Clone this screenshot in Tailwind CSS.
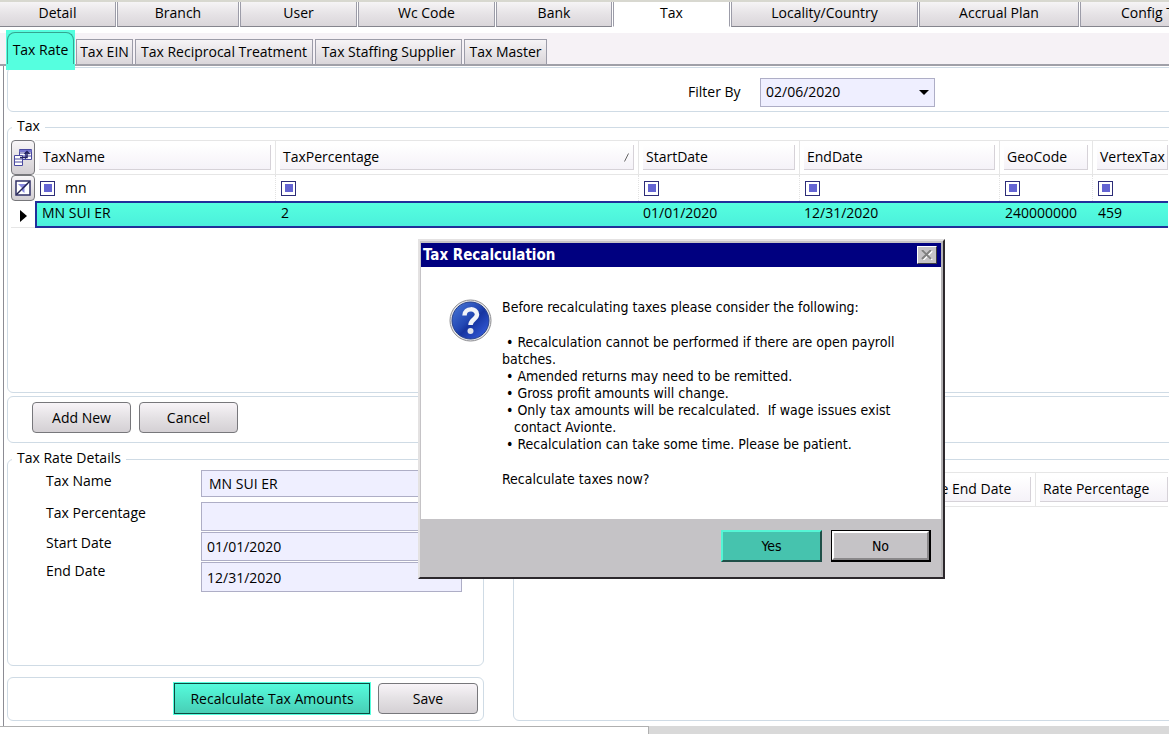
<!DOCTYPE html>
<html lang="en">
<head>
    <meta charset="UTF-8">
    <meta name="viewport" content="width=device-width, initial-scale=1.0">
    <title>Tax Setup</title>
    <script src="https://cdn.jsdelivr.net/npm/@tailwindcss/browser@4"></script>
</head>
<body class="bg-white text-black font-['Open_Sans','Noto_Sans',sans-serif] text-[14px] leading-[18px]">
    <div class="relative min-h-screen overflow-hidden flex flex-col">

        <!-- Main tabs -->
        <nav class="flex shrink-0 gap-px h-[27px] border-t-2 border-[#d8d8d0] whitespace-nowrap">
            <button class="w-[116px] pb-[2px] shrink-0 border-r border-b border-b-[#85858d] border-[#9c9ca8] bg-linear-to-b from-[#f6f4f6] via-[#e6e3e6] to-[#dad6da]">Detail</button>
            <button class="w-[122px] pb-[2px] shrink-0 border-x border-b border-b-[#85858d] border-[#9c9ca8] bg-linear-to-b from-[#f6f4f6] via-[#e6e3e6] to-[#dad6da]">Branch</button>
            <button class="w-[117px] pb-[2px] shrink-0 border-x border-b border-b-[#85858d] border-[#9c9ca8] bg-linear-to-b from-[#f6f4f6] via-[#e6e3e6] to-[#dad6da]">User</button>
            <button class="w-[137px] pb-[2px] shrink-0 border-x border-b border-b-[#85858d] border-[#9c9ca8] bg-linear-to-b from-[#f6f4f6] via-[#e6e3e6] to-[#dad6da]">Wc Code</button>
            <button class="w-[116px] pb-[2px] shrink-0 border-x border-b border-b-[#85858d] border-[#9c9ca8] bg-linear-to-b from-[#f6f4f6] via-[#e6e3e6] to-[#dad6da]">Bank</button>
            <button class="w-[117px] pb-[2px] shrink-0 border-x border-b border-b-white border-[#9c9ca8] bg-white">Tax</button>
            <button class="w-[187px] pb-[2px] shrink-0 border-x border-b border-b-[#85858d] border-[#9c9ca8] bg-linear-to-b from-[#f6f4f6] via-[#e6e3e6] to-[#dad6da]">Locality/Country</button>
            <button class="w-[160px] pb-[2px] shrink-0 border-x border-b border-b-[#85858d] border-[#9c9ca8] bg-linear-to-b from-[#f6f4f6] via-[#e6e3e6] to-[#dad6da]">Accrual Plan</button>
            <button class="w-[150px] pb-[2px] shrink-0 border-x border-b border-b-[#85858d] border-[#9c9ca8] bg-linear-to-b from-[#f6f4f6] via-[#e6e3e6] to-[#dad6da]">Config Tax</button>
        </nav>

        <!-- Sub tabs -->
        <nav class="flex shrink-0 items-end gap-[2px] h-[33px] mt-[6px] pl-[6px] border-b-2 border-[#a0a0a8] bg-[#f6f2f6] whitespace-nowrap">
            <div class="relative z-10 -mb-[6px] -mt-1 w-[69px] h-10 shrink-0 bg-[#55ffdf] px-px pt-[2px] pb-[6px]">
                <button class="w-[67px] h-full pt-[3px] rounded-t-lg border-x border-t border-[#35a590]">Tax Rate</button>
            </div>
            <button class="h-[25px] w-[57px] pb-px shrink-0 -ml-px border-x border-t border-[#9c9ca8] bg-linear-to-b from-[#f6f4f6] to-[#dad6da]">Tax EIN</button>
            <button class="h-[25px] w-[178px] pb-px shrink-0 border-x border-t border-[#9c9ca8] bg-linear-to-b from-[#f6f4f6] to-[#dad6da]">Tax Reciprocal Treatment</button>
            <button class="h-[25px] w-[147px] pb-px shrink-0 border-x border-t border-[#9c9ca8] bg-linear-to-b from-[#f6f4f6] to-[#dad6da]">Tax Staffing Supplier</button>
            <button class="h-[25px] w-[83px] pb-px shrink-0 border-x border-t border-[#9c9ca8] bg-linear-to-b from-[#f6f4f6] to-[#dad6da]">Tax Master</button>
        </nav>

        <main class="ml-[3px] pl-[3px] pt-px pb-[5px] border-l border-[#8c8c94]">
            <!-- Date filter -->
            <section class="flex items-center h-[45px] -mr-4 pl-[680px] pt-[5px] border border-[#cfdbe5] rounded-md">
                <label for="filterBy" class="w-[72px]">Filter By</label>
                <div class="relative w-[175px]">
                    <select id="filterBy" class="appearance-none block w-full h-[29px] pl-[5px] border border-[#aeaec6] bg-[#efefff]">
                        <option>02/06/2020</option>
                    </select>
                    <svg class="absolute right-[6px] top-3 pointer-events-none" width="10" height="5" viewBox="0 0 10 5"><path d="M0 0H10L5 5Z" fill="#000"/></svg>
                </div>
            </section>

            <!-- Tax grid -->
            <fieldset class="min-w-0 h-[275px] mt-[6px] -mr-4 pl-[3px] pr-4 pt-1 border border-[#cfdbe5] rounded-md">
                <legend class="ml-px px-[5px] pb-[3px] leading-[15px]">Tax</legend>
                <table class="table-fixed w-full border-separate border-spacing-0 text-left">
                    <colgroup>
                        <col class="w-6"><col class="w-[241px]"><col class="w-[363px]"><col class="w-[161px]"><col class="w-[200px]"><col class="w-[93px]"><col>
                    </colgroup>
                    <thead>
                        <tr class="h-[35px]">
                            <th class="p-0">
                                <button aria-label="Column chooser" class="flex items-center justify-center w-6 h-[35px] rounded border border-[#77777b] bg-linear-to-b from-[#f8f6f8] to-[#d2ced2]">
                                    <svg width="19" height="20" viewBox="0 0 19 20" fill="#fff" stroke="#4949a0">
                                        <path d="M5.500 1.500H17.500V11.500H5.500ZM5.500 5H17.500M5.500 8H17.500M11.500 1.500V11.500"/>
                                        <path d="M5.500 2H17.500V4H5.500Z" fill="#7777d0" stroke="none"/>
                                        <path d="M.500 7.500H8.500V17.500H.500ZM.500 11H8.500M.500 14H8.500"/>
                                        <path d="M6 9.500H13V4M10.500 6L13 3.500L15.500 6" fill="none" stroke="#222260" stroke-width="1.500"/>
                                    </svg>
                                </button>
                            </th>
                            <th class="p-1 font-normal border-y border-r border-[#e6e6e6]"><div class="h-[25px] pl-1 leading-6 border-r border-b border-[#d6d2d8] bg-linear-to-b from-white to-[#f5f2f8]">TaxName</div></th>
                            <th class="p-1 font-normal border-y border-r border-[#e6e6e6]"><div class="flex justify-between items-center h-[25px] pl-[3px] pr-1 leading-6 border-r border-b border-[#d6d2d8] bg-linear-to-b from-white to-[#f5f2f8]">TaxPercentage
                                <svg width="5" height="9" viewBox="0 0 5 9"><path d="M.500 8.500L4.500 .500" stroke="#666"/></svg></div></th>
                            <th class="p-1 font-normal border-y border-r border-[#e6e6e6]"><div class="h-[25px] pl-[3px] leading-6 border-r border-b border-[#d6d2d8] bg-linear-to-b from-white to-[#f5f2f8]">StartDate</div></th>
                            <th class="p-1 font-normal border-y border-r border-[#e6e6e6]"><div class="h-[25px] pl-[3px] leading-6 border-r border-b border-[#d6d2d8] bg-linear-to-b from-white to-[#f5f2f8]">EndDate</div></th>
                            <th class="p-1 font-normal border-y border-r border-[#e6e6e6]"><div class="h-[25px] pl-[3px] leading-6 border-r border-b border-[#d6d2d8] bg-linear-to-b from-white to-[#f5f2f8]">GeoCode</div></th>
                            <th class="py-1 pl-1 pr-0 font-normal border-y border-[#e6e6e6]"><div class="h-[25px] pl-[3px] leading-6 border-r border-b border-[#d6d2d8] bg-linear-to-b from-white to-[#f5f2f8]">VertexTax</div></th>
                        </tr>
                    </thead>
                    <tbody>
                        <tr class="h-[26px]">
                            <td class="p-0">
                                <button aria-label="Clear filters" class="flex items-center justify-center w-6 h-[26px] rounded border border-[#77777b] bg-linear-to-b from-[#f8f6f8] to-[#d2ced2]">
                                    <svg width="16" height="16" viewBox="0 0 16 16" fill="none">
                                        <rect x="1" y="1" width="14" height="14" fill="#fff" stroke="#303068" stroke-width="1.500"/>
                                        <path d="M3 4H13L9.500 8V13L7 11V8Z" fill="#8b8be0"/>
                                        <path d="M1.500 14.500L14.500 1.500" stroke="#222250" stroke-width="1.500"/>
                                    </svg>
                                </button>
                            </td>
                            <td class="py-0 pl-[5px] pr-0 border-r border-dotted border-[#e2e2e2]"><div class="flex items-center gap-[10px]">
                                <button aria-label="TaxName operator" class="flex items-center justify-center size-[15px] shrink-0 border border-[#2c2c78]"><span class="block size-2 bg-[#6464d2]"></span></button>
                                <input aria-label="TaxName filter" type="text" value="mn" class="w-40 h-5 pb-[2px]"></div></td>
                            <td class="py-0 pl-[5px] pr-0 border-r border-dotted border-[#e2e2e2]"><button aria-label="TaxPercentage operator" class="flex items-center justify-center size-[15px] border border-[#2c2c78]"><span class="block size-2 bg-[#6464d2]"></span></button></td>
                            <td class="py-0 pl-[5px] pr-0 border-r border-dotted border-[#e2e2e2]"><button aria-label="StartDate operator" class="flex items-center justify-center size-[15px] border border-[#2c2c78]"><span class="block size-2 bg-[#6464d2]"></span></button></td>
                            <td class="py-0 pl-[5px] pr-0 border-r border-dotted border-[#e2e2e2]"><button aria-label="EndDate operator" class="flex items-center justify-center size-[15px] border border-[#2c2c78]"><span class="block size-2 bg-[#6464d2]"></span></button></td>
                            <td class="py-0 pl-[5px] pr-0 border-r border-dotted border-[#e2e2e2]"><button aria-label="GeoCode operator" class="flex items-center justify-center size-[15px] border border-[#2c2c78]"><span class="block size-2 bg-[#6464d2]"></span></button></td>
                            <td class="py-0 pl-[5px] pr-0"><button aria-label="VertexTax operator" class="flex items-center justify-center size-[15px] border border-[#2c2c78]"><span class="block size-2 bg-[#6464d2]"></span></button></td>
                        </tr>
                        <tr class="h-[27px]">
                            <td class="py-0 pl-[9px] pr-0 border-b border-[#e6e6e6]"><svg class="mt-1" width="7" height="12" viewBox="0 0 7 12"><path d="M0 0L7 6L0 12Z" fill="#000"/></svg></td>
                            <td class="pt-0 pb-1 pl-[5px] pr-0 border-l-2 border-t-2 border-b-2 border-[#20309a] bg-linear-to-b from-[#55ffdf] to-[#4cf0dc]">MN SUI ER</td>
                            <td class="pt-0 pb-1 pl-[5px] pr-0 border-y-2 border-[#20309a] bg-linear-to-b from-[#55ffdf] to-[#4cf0dc]">2</td>
                            <td class="pt-0 pb-1 pl-1 pr-0 border-y-2 border-[#20309a] bg-linear-to-b from-[#55ffdf] to-[#4cf0dc]">01/01/2020</td>
                            <td class="pt-0 pb-1 pl-1 pr-0 border-y-2 border-[#20309a] bg-linear-to-b from-[#55ffdf] to-[#4cf0dc]">12/31/2020</td>
                            <td class="pt-0 pb-1 pl-[5px] pr-0 border-y-2 border-[#20309a] bg-linear-to-b from-[#55ffdf] to-[#4cf0dc]">240000000</td>
                            <td class="pt-0 pb-1 pl-[5px] pr-0 border-y-2 border-[#20309a] bg-linear-to-b from-[#55ffdf] to-[#4cf0dc]">459</td>
                        </tr>
                    </tbody>
                </table>
            </fieldset>

            <!-- Grid actions -->
            <section class="flex items-center gap-2 h-[47px] mt-[3px] -mr-4 pl-6 pb-1 border border-[#cfdbe5] rounded-md">
                <button class="w-[99px] h-[31px] rounded border border-[#77777b] bg-linear-to-b from-[#f8f4f8] via-[#e4e1e4] to-[#d4d0d4]">Add New</button>
                <button class="w-[99px] h-[31px] rounded border border-[#77777b] bg-linear-to-b from-[#f8f4f8] via-[#e4e1e4] to-[#d4d0d4]">Cancel</button>
            </section>

            <div class="flex gap-[29px] -mr-4">
                <div class="w-[477px] shrink-0">
                    <!-- Rate details form -->
                    <fieldset class="min-w-0 h-[216px] mt-[7px] pl-[38px] pr-[21px] pt-[2px] border border-[#cfdbe5] rounded-md">
                        <legend class="-ml-[34px] px-[5px] pb-[3px] leading-[15px]">Tax Rate Details</legend>
                        <div class="flex flex-col gap-px leading-[21px]">
                            <div class="flex mb-1">
                                <label for="taxName" class="w-[155px]">Tax Name</label>
                                <input id="taxName" type="text" value="MN SUI ER" class="flex-1 min-w-0 h-[27px] pl-[7px] pb-px border border-[#aeaec6] bg-[#efefff]">
                            </div>
                            <div class="flex">
                                <label for="taxPercentage" class="w-[155px]">Tax Percentage</label>
                                <input id="taxPercentage" type="text" class="flex-1 min-w-0 h-[29px] pl-[7px] border border-[#aeaec6] bg-[#efefff]">
                            </div>
                            <div class="flex">
                                <label for="startDate" class="w-[155px]">Start Date</label>
                                <select id="startDate" class="appearance-none flex-1 h-[29px] pl-[5px] border border-[#aeaec6] bg-[#efefff]"><option>01/01/2020</option></select>
                            </div>
                            <div class="flex relative">
                                <label for="endDate" class="w-[155px] leading-[18px]">End Date</label>
                                <select id="endDate" class="appearance-none flex-1 h-[30px] pl-[5px] border border-[#aeaec6] bg-[#efefff]"><option>12/31/2020</option></select>
                                <svg class="absolute right-[6px] top-3 pointer-events-none" width="10" height="5" viewBox="0 0 10 5"><path d="M0 0H10L5 5Z" fill="#000"/></svg>
                            </div>
                        </div>
                    </fieldset>

                    <section class="flex items-center justify-end gap-[7px] h-11 mt-[11px] pr-[5px] pb-px border border-[#cfdbe5] rounded-md">
                        <button class="w-[198px] h-[33px] border-2 border-[#0d4a40] outline outline-[#55ffdf] -outline-offset-1 bg-linear-to-b from-[#55fbdc] to-[#48cfb6]">Recalculate Tax Amounts</button>
                        <button class="w-[100px] h-[31px] rounded border border-[#77777b] bg-linear-to-b from-[#f8f4f8] via-[#e4e1e4] to-[#d4d0d4]">Save</button>
                    </section>
                </div>

                <!-- Rate history -->
                <section class="flex-1 min-w-0 mt-4 pt-3 pl-[2px] pr-4 border border-[#cfdbe5] rounded-md">
                    <table class="table-fixed w-full border-separate border-spacing-0 text-left">
                        <colgroup><col><col class="w-[125px]"><col class="w-[132px]"></colgroup>
                        <thead>
                            <tr class="h-[35px]">
                                <th class="p-1 font-normal border-y border-r border-[#e6e6e6]"></th>
                                <th class="p-1 font-normal border-y border-r border-[#e6e6e6]"><div class="h-[25px] pl-1 leading-6 border-r border-b border-[#d6d2d8] bg-linear-to-b from-white to-[#f5f2f8]">Rate End Date</div></th>
                                <th class="py-1 pl-1 pr-0 font-normal border-y border-[#e6e6e6]"><div class="h-[25px] pl-[3px] leading-6 border-r border-b border-[#d6d2d8] bg-linear-to-b from-white to-[#f5f2f8]">Rate Percentage</div></th>
                            </tr>
                        </thead>
                    </table>
                </section>
            </div>
        </main>

        <!-- Horizontal scrollbar -->
        <div class="flex flex-1 min-h-2 bg-[#d9d9d9]">
            <div class="w-[649px] border-t border-r border-[#b0b0b0] bg-white"></div>
        </div>

        <!-- Recalculation dialog -->
        <div role="dialog" aria-labelledby="dialogTitle" class="absolute z-20 left-[418px] top-[239px] w-[527px] border-2 border-t-[#e4e2e2] border-l-[#e4e2e2] border-r-[#2c282c] border-b-[#2c282c] font-['DejaVu_Sans_Condensed','DejaVu_Sans',sans-serif]">
            <div class="border-2 border-l border-r-[#b4b2b4] border-y-[#c5c3c6] border-l-[#c5c3c6] bg-white">
                <div class="flex items-center justify-between h-6 pl-[2px] pr-1 bg-[#000080] text-white">
                    <h2 id="dialogTitle" class="font-bold text-[15px]">Tax Recalculation</h2>
                    <button aria-label="Close" class="flex items-center justify-center w-5 h-[18px] border border-t-white border-l-white border-r-[#404040] border-b-[#404040] bg-[#c5c3c6]">
                        <svg width="12" height="10" viewBox="0 0 12 10" fill="none" stroke-width="2"><path d="M2 1L11 10M11 1L2 10" stroke="#fff"/><path d="M1 0L10 9M10 0L1 9" stroke="#808080"/></svg>
                    </button>
                </div>
                <div class="flex gap-[10px] h-[252px] pt-8 pl-7 text-[14px] leading-[17px]">
                    <svg class="shrink-0" width="43" height="43" viewBox="0 0 43 43">
                        <defs>
                            <linearGradient id="ball" x1="0" y1="0" x2="1" y2="1"><stop offset="0" stop-color="#4a7ad8"/><stop offset=".45" stop-color="#2348b4"/><stop offset=".55" stop-color="#1634a0"/><stop offset="1" stop-color="#3d66e8"/></linearGradient>
                        </defs>
                        <circle cx="21.500" cy="21.500" r="20.500" fill="#e8e8ea" stroke="#8c8c90"/>
                        <circle cx="21.500" cy="21.500" r="18.500" fill="url(#ball)" stroke="#25408c"/>
                        <path d="M15.500 16.500C15.500 8.500 28 8.500 28 15.500C28 20 21.500 20.500 21.500 26" fill="none" stroke="#f2f4f8" stroke-width="4.500"/>
                        <circle cx="21.500" cy="32" r="3" fill="#e2e4ea"/>
                    </svg>
                    <div>
                        <p class="mb-[18px]">Before recalculating taxes please consider the following:</p>
                        <ul class="mb-[18px]">
                            <li class="whitespace-pre"> • Recalculation cannot be performed if there are open payroll
batches.</li>
                            <li class="whitespace-pre"> • Amended returns may need to be remitted.</li>
                            <li class="whitespace-pre"> • Gross profit amounts will change.</li>
                            <li class="whitespace-pre"> • Only tax amounts will be recalculated.  If wage issues exist
   contact Avionte.</li>
                            <li class="whitespace-pre"> • Recalculation can take some time. Please be patient.</li>
                        </ul>
                        <p>Recalculate taxes now?</p>
                    </div>
                </div>
                <div class="flex justify-end gap-[9px] h-14 pt-[11px] pr-[10px] bg-[#c5c3c6] text-[14px]">
                    <button class="w-[101px] h-8 border-2 border-t-[#55f5d5] border-l-[#55f5d5] border-r-[#1f4f48] border-b-[#1f4f48] bg-[#46c3ae]">Yes</button>
                    <button class="w-[100px] h-8 border border-r-2 border-b-2 border-black bg-[#c5c3c6] p-0"><span class="flex items-center justify-center size-full border-2 border-t-white border-l-white border-r-[#8a888a] border-b-[#8a888a]">No</span></button>
                </div>
            </div>
        </div>
    </div>
</body>
</html>
